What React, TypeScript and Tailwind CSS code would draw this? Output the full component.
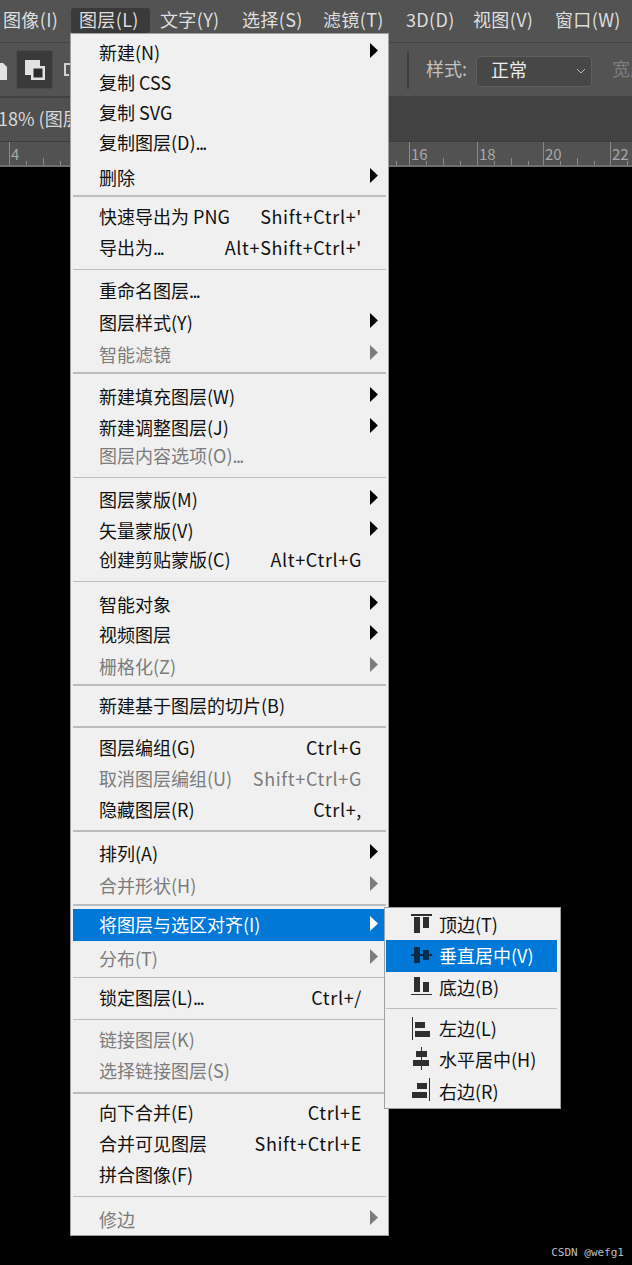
import React from "react";

const FONT = "[font-family:'Noto_Sans_CJK_SC','Liberation_Sans',sans-serif]";

type Row = { t: string; mt: string; s?: string; a?: boolean; d?: boolean; sep?: string };

const rows: Row[] = [
  { t: "新建(N)", mt: "mt-[5px]", a: true },
  { t: "复制 CSS", mt: "mt-[2px]" },
  { t: "复制 SVG", mt: "mt-[2px]" },
  { t: "复制图层(D)...", mt: "mt-[2px]" },
  { t: "删除", mt: "mt-[7px]", a: true },
  { t: "", mt: "mt-[3px]", sep: "h-[2px]" },
  { t: "快速导出为 PNG", mt: "mt-[6px]", s: "Shift+Ctrl+'" },
  { t: "导出为...", mt: "mt-[3px]", s: "Alt+Shift+Ctrl+'" },
  { t: "", mt: "mt-[7px]", sep: "h-[1px]" },
  { t: "重命名图层...", mt: "mt-[7px]" },
  { t: "图层样式(Y)", mt: "mt-[4px]", a: true },
  { t: "智能滤镜", mt: "mt-[4px]", a: true, d: true },
  { t: "", mt: "mt-[3px]", sep: "h-[2px]" },
  { t: "新建填充图层(W)", mt: "mt-[9px]", a: true },
  { t: "新建调整图层(J)", mt: "mt-[3px]", a: true },
  { t: "图层内容选项(O)...", mt: "mt-0", d: true },
  { t: "", mt: "mt-[7px]", sep: "h-[1px]" },
  { t: "图层蒙版(M)", mt: "mt-[8px]", a: true },
  { t: "矢量蒙版(V)", mt: "mt-[3px]", a: true },
  { t: "创建剪贴蒙版(C)", mt: "mt-[1px]", s: "Alt+Ctrl+G" },
  { t: "", mt: "mt-[7px]", sep: "h-[1px]" },
  { t: "智能对象", mt: "mt-[9px]", a: true },
  { t: "视频图层", mt: "mt-[2px]", a: true },
  { t: "栅格化(Z)", mt: "mt-[4px]", a: true, d: true },
  { t: "", mt: "mt-[3px]", sep: "h-[2px]" },
  { t: "新建基于图层的切片(B)", mt: "mt-[6px]" },
  { t: "", mt: "mt-[6px]", sep: "h-[2px]" },
  { t: "图层编组(G)", mt: "mt-[6px]", s: "Ctrl+G" },
  { t: "取消图层编组(U)", mt: "mt-[3px]", s: "Shift+Ctrl+G", d: true },
  { t: "隐藏图层(R)", mt: "mt-[3px]", s: "Ctrl+," },
  { t: "", mt: "mt-[6px]", sep: "h-[2px]" },
  { t: "排列(A)", mt: "mt-[8px]", a: true },
  { t: "合并形状(H)", mt: "mt-[4px]", a: true, d: true },
  { t: "", mt: "mt-[4px]", sep: "h-[2px]" },
];

const rows2: Row[] = [
  { t: "分布(T)", mt: "mt-[4px]", a: true, d: true },
  { t: "", mt: "mt-[4px]", sep: "h-[1px]" },
  { t: "锁定图层(L)...", mt: "mt-[6px]", s: "Ctrl+/" },
  { t: "", mt: "mt-[7px]", sep: "h-[1px]" },
  { t: "链接图层(K)", mt: "mt-[6px]", d: true },
  { t: "选择链接图层(S)", mt: "mt-[3px]", d: true },
  { t: "", mt: "mt-[7px]", sep: "h-[2px]" },
  { t: "向下合并(E)", mt: "mt-[5px]", s: "Ctrl+E" },
  { t: "合并可见图层", mt: "mt-[3px]", s: "Shift+Ctrl+E" },
  { t: "拼合图像(F)", mt: "mt-[3px]" },
  { t: "", mt: "mt-[7px]", sep: "h-[1px]" },
  { t: "修边", mt: "mt-[9px]", a: true, d: true },
];

function Arrow({ color }: { color: string }) {
  return (
    <svg width="8" height="15" viewBox="0 0 8 15" className="shrink-0">
      <path d="M0 0 L8 7.5 L0 15 Z" fill={color} />
    </svg>
  );
}

function Label({ t }: { t: string }) {
  const dots = t.endsWith("...");
  return (
    <span className="whitespace-nowrap -translate-y-px">
      {dots ? t.slice(0, -3) : t}
      {dots ? <span className="tracking-[-1.6px]">...</span> : null}
    </span>
  );
}

function MenuRow({ r }: { r: Row }) {
  if (r.sep) return <div className={`${r.mt} ${r.sep} bg-[#bdbdbd]`} />;
  return (
    <div className={`${r.mt} h-[28px] flex items-center pl-[26px] pr-[8px] ${r.d ? "text-[#7c7c7c]" : "text-[#111]"}`}>
      <Label t={r.t} />
      {r.s ? <span className="ml-auto mr-[16px] whitespace-nowrap tracking-[0.65px] -translate-y-px">{r.s}</span> : null}
      {r.a ? (
        <span className="ml-auto -translate-y-[3px]">
          <Arrow color={r.d ? "#7c7c7c" : "#000"} />
        </span>
      ) : null}
    </div>
  );
}

const topItems = [
  { t: "图像(I)", w: "w-[71px] pl-[3px]", on: false },
  { t: "图层(L)", w: "w-[79px] pl-[8px]", on: true },
  { t: "文字(Y)", w: "w-[92px] pl-[10px]", on: false },
  { t: "选择(S)", w: "w-[82px]", on: false },
  { t: "滤镜(T)", w: "w-[82px] -ml-[1px] mr-[1px]", on: false },
  { t: "3D(D)", w: "w-[67px]", on: false },
  { t: "视图(V)", w: "w-[82px]", on: false },
  { t: "窗口(W)", w: "w-[77px]", on: false },
];

function SubIcon({ k, color }: { k: number; color: string }) {
  const paths = [
    <><rect x="0" y="2" width="21" height="2" /><rect x="3" y="5" width="6" height="16" /><rect x="12" y="5" width="6" height="11" /></>,
    <><rect x="0" y="10" width="21" height="2" /><rect x="3" y="3" width="6" height="16" /><rect x="12" y="6" width="6" height="10" /></>,
    <><rect x="3" y="1" width="6" height="15" /><rect x="12" y="6" width="6" height="10" /><rect x="0" y="18" width="21" height="1" /></>,
    <><rect x="1" y="0" width="1" height="23" /><rect x="4" y="5" width="10" height="6" /><rect x="4" y="14" width="15" height="6" /></>,
    <><rect x="10" y="-1" width="1" height="23" /><rect x="5" y="3" width="11" height="6" /><rect x="2" y="12" width="16" height="6" /></>,
    <><rect x="18" y="-2" width="1" height="23" /><rect x="6" y="3" width="10" height="6" /><rect x="1" y="12" width="15" height="6" /></>,
  ];
  return (
    <svg width="21" height="24" viewBox="0 0 21 24" fill={color} className="shrink-0 overflow-visible">
      {paths[k]}
    </svg>
  );
}

function SubRow({ t, k, cls, on, up }: { t: string; k: number; cls: string; on?: boolean; up?: boolean }) {
  return (
    <div className={`${cls} flex items-center pl-[25px] gap-[7px] ${on ? "bg-[#0078d7] text-white" : "text-[#111]"}`}>
      <SubIcon k={k} color={on ? "#0a2c4a" : "#2e2e2e"} />
      <span className={`whitespace-nowrap ${up ? "-translate-y-px" : ""}`}>{t}</span>
    </div>
  );
}

function Ruler() {
  const labels = [
    { n: "4", w: "w-[68px]" },
    { n: "", w: "w-[67px]" },
    { n: "", w: "w-[67px]" },
    { n: "", w: "w-[67px]" },
    { n: "", w: "w-[67px]" },
    { n: "", w: "w-[64px]" },
    { n: "16", w: "w-[68px]" },
    { n: "18", w: "w-[66px]" },
    { n: "20", w: "w-[67px]" },
    { n: "22", w: "w-[22px]" },
  ];
  return (
    <div className="h-[26px] bg-[#525252] border-t border-[#3c3c3c] border-b-2 border-b-[#6f6f6f] flex pl-[9px] overflow-hidden">
      {labels.map((l, i) => (
        <div key={i} className={`${l.w} shrink-0 h-full relative flex`}>
          <div className="w-[1px] h-full bg-[#8a8a8a]" />
          <span className="pl-[1px] text-[15px] leading-[24px] text-[#a8a8a8]">{l.n}</span>
          <div className="absolute bottom-0 left-[17px] w-[1px] h-[4px] bg-[#8a8a8a]" />
          <div className="absolute bottom-0 left-[34px] w-[1px] h-[7px] bg-[#8a8a8a]" />
          <div className="absolute bottom-0 left-[51px] w-[1px] h-[4px] bg-[#8a8a8a]" />
        </div>
      ))}
    </div>
  );
}

export default function App() {
  return (
    <div className={`relative w-[632px] h-[1265px] bg-black overflow-hidden text-[18px] leading-[28px] ${FONT}`}>
      {/* Top menu bar */}
      <div className="h-[43px] bg-[#535353] border-b border-[#434343] flex pt-[8px] text-[#dedede] tracking-[0.35px]">
        {topItems.map((m) => (
          <div key={m.t} className={`${m.w} shrink-0 h-[25px] leading-[23px] whitespace-nowrap ${m.on ? "bg-[#3a3a3a] rounded-[3px]" : ""}`}>
            {m.t}
          </div>
        ))}
      </div>

      {/* Options bar */}
      <div className="h-[55px] bg-[#535353] border-b-2 border-[#414141] flex items-center overflow-hidden">
        <div className="w-[16px] shrink-0 flex">
          <svg width="8" height="20" viewBox="0 0 8 20">
            <path d="M0 3 H3 L7 7 V20 H0 Z" fill="#e2e2e2" />
          </svg>
        </div>
        <div className="w-[37px] h-[39px] shrink-0 bg-[#3a3a3a] border border-[#4a4a4a] rounded-[3px] flex items-center justify-center">
          <svg width="20" height="20" viewBox="0 0 20 20">
            <rect x="0" y="0" width="15" height="15" fill="#e2e2e2" />
            <rect x="6" y="6" width="14" height="14" fill="#e2e2e2" />
            <rect x="8.5" y="8.5" width="9" height="9" fill="#2b2b2b" />
          </svg>
        </div>
        <div className="ml-[11px] w-[296px] shrink-0 flex">
          <svg width="8" height="16" viewBox="0 0 8 16">
            <path d="M0 1 H8 V3 H2 V12 H5 V14 H0 Z" fill="#d0d0d0" />
          </svg>
        </div>
        <div className="ml-[47px] w-[2px] h-[38px] bg-[#3e3e3e] shrink-0" />
        <span className="ml-[17px] w-[50px] shrink-0 text-[#c2c2c2] whitespace-nowrap -translate-y-[2px]">样式:</span>
        <div className="mt-[3px] w-[116px] h-[31px] shrink-0 bg-[#474747] border border-[#5f5f5f] rounded-[4px] flex items-center pl-[14px] pr-[5px] text-[#ececec]">
          <span className="-translate-y-[2px]">正常</span>
          <svg className="ml-auto" width="10" height="6" viewBox="0 0 10 6">
            <path d="M1 1 L5 5 L9 1" fill="none" stroke="#bdbdbd" strokeWidth="1" />
          </svg>
        </div>
        <span className="ml-[20px] shrink-0 text-[#7d7d7d] whitespace-nowrap -translate-y-[2px]">宽度</span>
      </div>

      {/* Tab bar */}
      <div className="h-[43px] bg-[#424242] flex text-[#d8d8d8] whitespace-nowrap overflow-hidden">
        <div className="w-[120px] shrink-0 h-full bg-[#505050] leading-[41px] overflow-hidden">
          <span className="-ml-[2px] block">18% (图层</span>
        </div>
      </div>

      <Ruler />

      {/* Main dropdown */}
      <div className="absolute left-[70px] top-[33px] w-[319px] h-[1203px] bg-[#f0f0f0] border border-[#a0a0a0] pl-[2px] pr-[2px]">
        {rows.map((r, i) => (
          <MenuRow key={i} r={r} />
        ))}
        <div className="mt-[3px] h-[32px] flex items-center pl-[26px] pr-[8px] bg-[#0078d7] text-white">
          <Label t="将图层与选区对齐(I)" />
          <span className="ml-auto -translate-y-[2px]">
            <Arrow color="#fff" />
          </span>
        </div>
        {rows2.map((r, i) => (
          <MenuRow key={i} r={r} />
        ))}
      </div>

      {/* Submenu */}
      <div className="absolute left-[384px] top-[907px] w-[177px] h-[202px] bg-[#f0f0f0] border border-[#a0a0a0] pl-[1px] pr-[3px]">
        <SubRow t="顶边(T)" k={0} cls="h-[32px]" />
        <SubRow t="垂直居中(V)" k={1} cls="h-[32px]" on up />
        <SubRow t="底边(B)" k={2} cls="h-[32px]" up />
        <div className="mt-[4px] h-[1px] bg-[#bdbdbd]" />
        <SubRow t="左边(L)" k={3} cls="mt-[4px] h-[32px]" up />
        <SubRow t="水平居中(H)" k={4} cls="h-[30px]" up />
        <SubRow t="右边(R)" k={5} cls="mt-[1px] h-[32px]" up />
      </div>

      {/* Watermark */}
      <div className="absolute right-[8px] bottom-[4px] text-[11px] leading-[16px] text-[#bdbdbd] [font-family:'DejaVu_Sans_Mono',monospace]">
        CSDN @wefg1
      </div>
    </div>
  );
}
